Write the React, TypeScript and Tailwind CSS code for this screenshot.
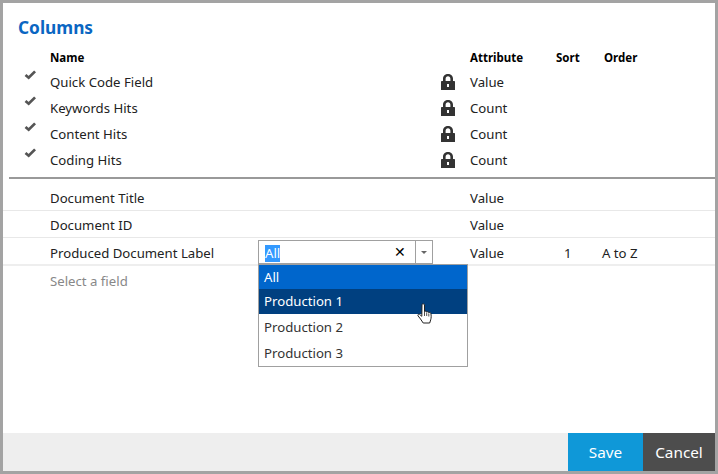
const lockedRows = [
  { name: "Quick Code Field", attribute: "Value" },
  { name: "Keywords Hits", attribute: "Count" },
  { name: "Content Hits", attribute: "Count" },
  { name: "Coding Hits", attribute: "Count" },
];

function LockIcon() {
  return (
    <svg width="14" height="16" viewBox="0 0 14 16" className="block">
      <path
        fill="#333333"
        fillRule="evenodd"
        d="M2 7V4.800C2 1.800 4.200 0 7 0s5 1.800 5 4.800V7h1.300c.4 0 .7.300.7.700V16H0V7.700C0 7.300.3 7 .7 7zm2.600 0h4.800V4.800C9.400 3.300 8.400 2.300 7 2.300S4.600 3.300 4.600 4.800zM6 10v3h2v-3z"
      />
    </svg>
  );
}

function CheckIcon() {
  return (
    <svg width="13" height="10" viewBox="0 0 14 11" className="block">
      <path fill="none" stroke="#555555" strokeWidth="3" d="M1.500 5.500 L5 8.500 L12 1.500" />
    </svg>
  );
}

function HandCursor() {
  return (
    <svg width="17" height="23" viewBox="0 0 17 23" className="block">
      <path
        fill="#ffffff"
        stroke="#222222"
        strokeWidth="1"
        strokeLinejoin="round"
        d="M5 1.500c.6-.9 2.200-.9 2.500.3v6.700c.8-.6 2-.4 2.200.5.700-.5 1.900-.3 2.100.7.700-.4 1.900-.2 2.100.8.400 2 .4 4.500-.2 6.300l-1 3.200H6.200L3.500 16 1 12.800c-.5-1 .5-2 1.500-1.500l2.300 2z"
      />
      <path fill="none" stroke="#222222" strokeWidth="0.800" d="M7.500 8.500v4.500M9.700 9.500v3.500M11.800 10.500v3" />
    </svg>
  );
}

export default function App() {
  return (
    <div className="h-[474px] w-[718px] overflow-hidden bg-[#a3a3a3] p-[3px] font-['Noto_Sans',sans-serif] text-[13.2px] text-[#222222]">
      <div className="flex h-[468px] flex-col bg-white">
        <div className="flex-1">
          <h2 className="pl-[15px] pt-[13px] text-[17.300px] leading-[24px] font-bold text-[#0a66c2]">Columns</h2>

          {/* Header */}
          <div className="mt-[9px] flex h-[18px] items-center text-[11.500px] font-bold text-black">
            <div className="w-[47px]" />
            <div className="w-[420px]">Name</div>
            <div className="w-[86px]">Attribute</div>
            <div className="w-[48px]">Sort</div>
            <div>Order</div>
          </div>

          {/* Locked columns */}
          <div className="mt-[3px]">
            {lockedRows.map((row) => (
              <div key={row.name} className="flex h-[26px] items-center">
                <div className="w-[47px] pl-[21px] pb-[17px]">
                  <CheckIcon />
                </div>
                <div className="w-[391px]">{row.name}</div>
                <div className="w-[29px] pb-[2px]">
                  <LockIcon />
                </div>
                <div>{row.attribute}</div>
              </div>
            ))}
          </div>

          <div className="ml-[6px] mt-[3px] h-[2px] bg-[#999999]" />

          {/* Other columns */}
          <div className="mt-[5px] flex h-[27px] items-center border-b border-[#e8e8e8] pt-[4px]">
            <div className="w-[47px]" />
            <div className="w-[420px]">Document Title</div>
            <div>Value</div>
          </div>
          <div className="flex h-[27px] items-center border-b border-[#e8e8e8] pt-[4px]">
            <div className="w-[47px]" />
            <div className="w-[420px]">Document ID</div>
            <div>Value</div>
          </div>
          <div className="flex h-[28px] items-center border-b-2 border-[#eeeeee] pt-[2px]">
            <div className="w-[47px]" />
            <div className="w-[208px] pt-[3px]">Produced Document Label</div>
            <div className="relative w-[175px]">
              <div className="flex h-[24px] border border-[#a0a0a0] bg-white">
                <div className="flex flex-1 items-center justify-between pl-[6px] pr-[9px]">
                  <span className="mt-[2px] bg-[#3399ff] leading-[17px] text-white">All</span>
                  <span className="text-[14px] leading-none text-black">✕</span>
                </div>
                <div className="flex w-[17px] items-center justify-center border-l border-[#a0a0a0]">
                  <div className="h-0 w-0 border-x-[3px] border-t-[3px] border-x-transparent border-t-[#666666]" />
                </div>
              </div>
              <div className="absolute top-[24px] left-0 z-10 w-[210px] border border-[#a0a0a0] bg-white">
                <div className="flex h-[24px] items-center bg-[#0066cc] pl-[5px] pt-[2px] text-white">All</div>
                <div className="relative flex h-[25px] items-center bg-[#004080] pl-[5px] text-white">
                  Production 1
                  <div className="absolute top-[14px] left-[158px]">
                    <HandCursor />
                  </div>
                </div>
                <div className="flex h-[26px] items-center pl-[5px] pt-[2px] text-[#333333]">Production 2</div>
                <div className="flex h-[26px] items-center pl-[5px] pt-[1px] text-[#333333]">Production 3</div>
              </div>
            </div>
            <div className="w-[37px]" />
            <div className="w-[94px] pt-[3px]">Value</div>
            <div className="w-[38px] pt-[3px]">1</div>
            <div className="pt-[3px]">A to Z</div>
          </div>
          <div className="flex h-[30px] items-center pt-[2px] text-[#888888]">
            <div className="w-[47px]" />
            <div>Select a field</div>
          </div>
        </div>

        {/* Footer */}
        <div className="flex h-[38px] justify-end bg-[#eeeeee] text-[15.300px] text-white">
          <button className="w-[75px] bg-[#0f98d8]">Save</button>
          <button className="w-[72px] bg-[#4d4d4d]">Cancel</button>
        </div>
      </div>
    </div>
  );
}
